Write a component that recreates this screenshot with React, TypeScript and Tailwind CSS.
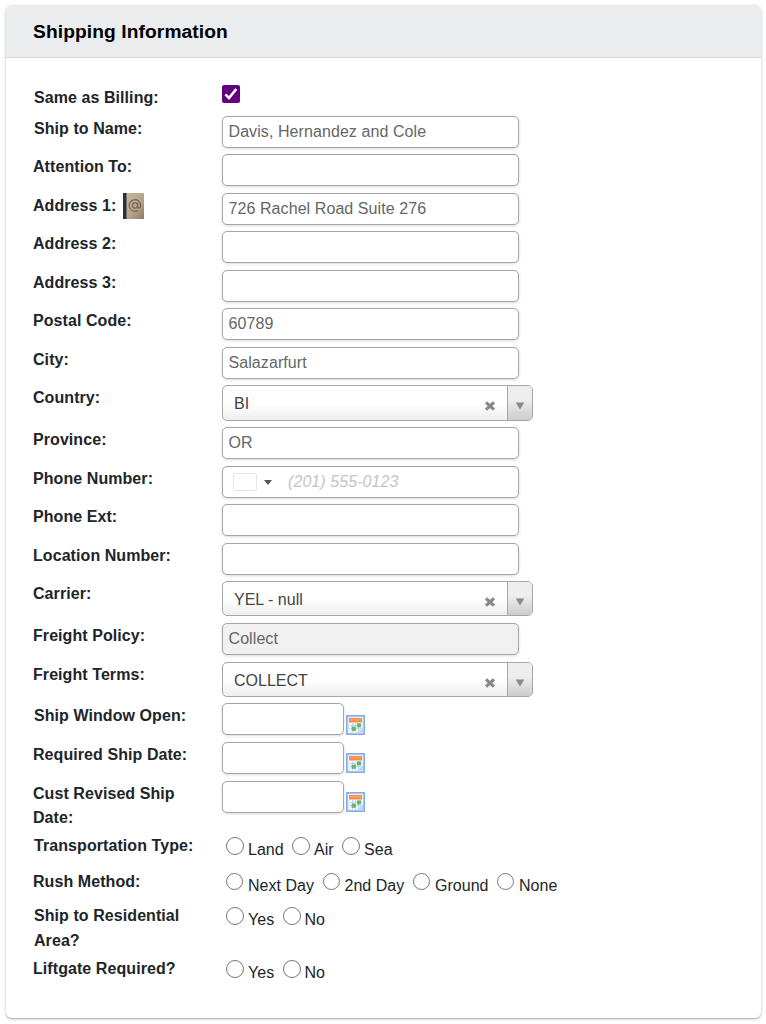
import React from 'react';

const FieldRow: React.FC<{ label: string; height: string; labelClass?: string; icon?: React.ReactNode; children: React.ReactNode }> = ({ label, height, labelClass = 'leading-6', icon, children }) => (
  <div className={`flex items-start ${height}`}>
    <div className={`w-[189px] shrink-0 pt-px flex font-bold tracking-[0.07px] ${labelClass}`}>
      <span>{label}</span>
      {icon}
    </div>
    {children}
  </div>
);

const TextField: React.FC<{ value?: string; disabled?: boolean; width?: string }> = ({ value = '', disabled, width = 'w-[297px]' }) => (
  <input
    type="text"
    defaultValue={value}
    disabled={disabled}
    className={`${width} h-8 shrink-0 rounded-[5px] border border-[#a6a6a6] px-[5.5px] tracking-[0.08px] text-[#666] shadow-[0_1px_3px_rgba(0,0,0,0.15)] ${disabled ? 'bg-[#f1f1f1]' : 'bg-white'}`}
  />
);

const SelectField: React.FC<{ value: string; height?: string; crossClass?: string }> = ({ value, height = 'h-9', crossClass = 'mt-[14px]' }) => (
  <div className={`w-[311px] ${height} flex rounded-[5px] border border-[#a6a6a6] overflow-hidden bg-linear-to-b from-white from-50% to-[#eee]`}>
    <span className="flex-1 pl-[11px] leading-[35px] text-[#444]">{value}</span>
    <svg width="12" height="12" viewBox="0 0 12 12" className={`mr-[11px] ${crossClass}`}>
      <path d="M2 2.3 10 9.7M10 2.3 2 9.7" stroke="#888" strokeWidth="3.2" />
    </svg>
    <div className="w-[25px] border-l border-[#a6a6a6] bg-linear-to-t from-[#ccc] to-[#eee] to-60%">
      <svg width="10" height="8" viewBox="0 0 10 8" className="mt-[16px] ml-[7px]">
        <path d="M.7 .5h8.6L5 7.5z" fill="#8a8a8a" />
      </svg>
    </div>
  </div>
);

const CalendarIcon: React.FC<{ className?: string }> = ({ className = 'mt-[11px]' }) => (
  <svg width="19" height="20" viewBox="0 0 19 20" className={`ml-[2px] shrink-0 ${className}`}>
    <rect x=".8" y=".8" width="17.4" height="18.4" fill="#d8e7fb" stroke="#7ba4e0" strokeWidth="1.4" />
    <rect x="2" y="2" width="15" height="16" fill="#e3eefd" />
    <rect x="3" y="3" width="13" height="4.4" fill="#fd8b43" />
    <path d="M4 4.8h11" stroke="#ffab70" />
    <rect x="3.5" y="8" width="12" height="9" fill="#f5faff" />
    <path d="M3.5 10.5h12M3.5 13.5h12M6.5 8v9M9.5 8v9M12.5 8v9" stroke="#bcd6f2" />
    <rect x="11" y="8.4" width="4" height="4" fill="#65b562" />
    <rect x="5.6" y="11.6" width="4.2" height="4.2" fill="#65b562" />
    <path d="M11 17.5l6-5v5z" fill="#bdd5f4" />
  </svg>
);

const AddressBookIcon = () => (
  <svg width="21" height="26" viewBox="0 0 21 26" className="ml-[7px] -mt-px shrink-0">
    <defs>
      <linearGradient id="cover" x1="0" y1="0" x2="1" y2="1">
        <stop offset="0" stopColor="#cbb9a2" />
        <stop offset=".6" stopColor="#b8a28a" />
        <stop offset="1" stopColor="#8f7a60" />
      </linearGradient>
    </defs>
    <rect width="21" height="26" fill="url(#cover)" />
    <rect width="3.5" height="26" fill="#293238" />
    <circle cx="12" cy="12.5" r="2.6" fill="none" stroke="#75685a" strokeWidth="1.2" />
    <path d="M14.7 9.8v3.8c0 2 3 1.8 3-1.1A5.8 5.8 0 1 0 15 17.4" fill="none" stroke="#75685a" strokeWidth="1.2" />
  </svg>
);

const PhoneField = () => (
  <div className="w-[297px] h-8 flex items-center rounded-[5px] border border-[#a6a6a6] bg-white shadow-[0_1px_3px_rgba(0,0,0,0.15)]">
    <span className="ml-[10px] w-6 h-[18px] rounded-[2px] border border-[#e5e5e5]" />
    <svg width="8" height="5" viewBox="0 0 8 5" className="ml-[7px]">
      <path d="M0 0h8L4 5z" fill="#555" />
    </svg>
    <input type="text" placeholder="(201) 555-0123" className="ml-4 w-[200px] italic tracking-[0.08px] placeholder:text-[#c4c4c4]" />
  </div>
);

interface RadioOption {
  label: string;
  width: string;
}

const RadioGroup: React.FC<{ options: RadioOption[]; small?: boolean }> = ({ options, small }) => (
  <div className="flex pl-1">
    {options.map(option => (
      <label key={option.label} className={`flex shrink-0 ${option.width}`}>
        <span className={`shrink-0 rounded-full border-[1.3px] border-[#767676] bg-white ${small ? 'w-[17px] h-[17px] mt-1 mr-[5px]' : 'w-[18px] h-[18px] mt-1 mr-1'}`} />
        <span className="mt-[5px] leading-6 tracking-[0.03px] whitespace-nowrap">{option.label}</span>
      </label>
    ))}
  </div>
);

const yesNo: RadioOption[] = [
  { label: 'Yes', width: 'w-[56.5px]' },
  { label: 'No', width: 'w-[60px]' },
];

const App: React.FC = () => {
  return (
    <div className="h-[1024px] bg-white px-[5px] pt-[5px] text-base text-[#212529] font-['Liberation_Sans',Arial,sans-serif]">
      <div className="ml-px w-[755px] h-[1013px] rounded-md bg-white overflow-hidden shadow-[0_1px_3px_1px_rgba(0,0,0,0.12),0_1px_1px_rgba(0,0,0,0.2)]">
        <div className="h-[53px] border-b border-[#d8dadd] bg-[#ebecee] pl-[27px] leading-[53px] text-[19.2px] tracking-[0.1px] font-bold text-black">Shipping Information</div>
        <div className="pt-[27px] pl-[27px]">
          <FieldRow label="Same as Billing:" height="h-[31px]" labelClass="pl-px leading-6">
            <div className="w-[18px] h-[18px] rounded-[2px] bg-[#640080]">
              <svg width="18" height="18" viewBox="0 0 18 18">
                <path d="M3.4 9.4 7 13l7.3-9" fill="none" stroke="#fff" strokeWidth="2.6" />
              </svg>
            </div>
          </FieldRow>
          <FieldRow label="Ship to Name:" height="h-[38px]" labelClass="pl-px leading-6">
            <TextField value="Davis, Hernandez and Cole" />
          </FieldRow>
          <FieldRow label="Attention To:" height="h-[39px]"><TextField /></FieldRow>
          <FieldRow label="Address 1:" height="h-[38px]" icon={<AddressBookIcon />}>
            <TextField value="726 Rachel Road Suite 276" />
          </FieldRow>
          <FieldRow label="Address 2:" height="h-[39px]"><TextField /></FieldRow>
          <FieldRow label="Address 3:" height="h-[38px]"><TextField /></FieldRow>
          <FieldRow label="Postal Code:" height="h-[39px]"><TextField value="60789" /></FieldRow>
          <FieldRow label="City:" height="h-[38px]"><TextField value="Salazarfurt" /></FieldRow>
          <FieldRow label="Country:" height="h-[42px]"><SelectField value="BI" /></FieldRow>
          <FieldRow label="Province:" height="h-[39px]"><TextField value="OR" /></FieldRow>
          <FieldRow label="Phone Number:" height="h-[38px]"><PhoneField /></FieldRow>
          <FieldRow label="Phone Ext:" height="h-[39px]"><TextField /></FieldRow>
          <FieldRow label="Location Number:" height="h-[38px]"><TextField /></FieldRow>
          <FieldRow label="Carrier:" height="h-[42px]"><SelectField value="YEL - null" height="h-[35px]" /></FieldRow>
          <FieldRow label="Freight Policy:" height="h-[39px]"><TextField value="Collect" disabled /></FieldRow>
          <FieldRow label="Freight Terms:" height="h-[41px]">
            <SelectField value="COLLECT" height="h-[35px]" crossClass="mt-[13.5px]" />
          </FieldRow>
          <FieldRow label="Ship Window Open:" height="h-[39px]" labelClass="pl-px leading-6">
            <TextField width="w-[122px]" />
            <CalendarIcon className="mt-3" />
          </FieldRow>
          <FieldRow label="Required Ship Date:" height="h-[39px]">
            <TextField width="w-[122px]" />
            <CalendarIcon />
          </FieldRow>
          <FieldRow label="Cust Revised Ship Date:" height="h-[52px]" labelClass="pr-2 leading-6">
            <TextField width="w-[122px]" />
            <CalendarIcon />
          </FieldRow>
          <FieldRow label="Transportation Type:" height="h-[36px]" labelClass="pl-px leading-6">
            <RadioGroup
              options={[
                { label: 'Land', width: 'w-[66px]' },
                { label: 'Air', width: 'w-[50px]' },
                { label: 'Sea', width: 'w-[60px]' },
              ]}
            />
          </FieldRow>
          <FieldRow label="Rush Method:" height="h-[34px]">
            <RadioGroup
              small
              options={[
                { label: 'Next Day', width: 'w-[96.5px]' },
                { label: '2nd Day', width: 'w-[90.5px]' },
                { label: 'Ground', width: 'w-[84px]' },
                { label: 'None', width: 'w-[60px]' },
              ]}
            />
          </FieldRow>
          <FieldRow label="Ship to Residential Area?" height="h-[53px]" labelClass="pl-px pr-2 leading-[24.5px]">
            <RadioGroup options={yesNo} />
          </FieldRow>
          <FieldRow label="Liftgate Required?" height="h-[34px]">
            <RadioGroup options={yesNo} />
          </FieldRow>
        </div>
      </div>
    </div>
  );
};

export default App;
